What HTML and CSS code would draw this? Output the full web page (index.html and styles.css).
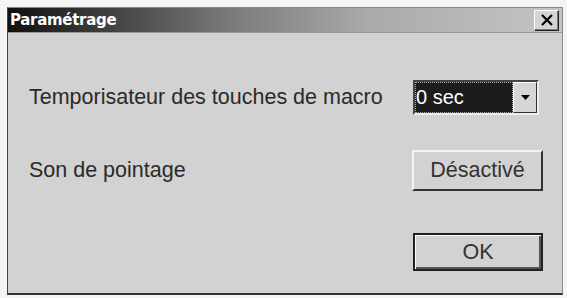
FILE: index.html
```html
<!DOCTYPE html>
<html lang="fr">
<head>
<meta charset="utf-8">
<link rel="stylesheet" href="styles.css">
</head>
<body>
<div class="window">
  <div class="titlebar">
    <span class="title">Paramétrage</span>
    <span class="close">
      <svg width="14" height="12" viewBox="0 0 14 12"><path d="M2 1 L12 11 M12 1 L2 11" stroke="#000" stroke-width="2.2" fill="none"/></svg>
    </span>
  </div>
  <div class="content">
    <div class="row row1">
      <span class="label">Temporisateur des touches de macro</span>
      <span class="select"><span class="value">0 sec</span><span class="arrow"><svg width="9" height="5" viewBox="0 0 9 5"><path d="M0 0 H9 L4.5 5 Z" fill="#000"/></svg></span></span>
    </div>
    <div class="row row2">
      <span class="label">Son de pointage</span>
      <span class="btn">Désactivé</span>
    </div>
    <div class="row row3">
      <span class="btn default">OK</span>
    </div>
  </div>
</div>
</body>
</html>
```
FILE: styles.css
```css
html, body { margin: 0; padding: 0; background: #f4f4f4; }
body { padding: 7px 4px 3px 7px; font-family: "Liberation Sans", Arial, sans-serif; }
.window {
  width: 556px; height: 288px;
  border-left: 1px solid #444;
  border-top: 1px solid #888;
  border-right: 1px solid #8a8a8a;
  border-bottom: 2px solid #333;
  background: #d2d2d2;
  display: flex; flex-direction: column;
  box-sizing: border-box;
}
.titlebar {
  height: 24px;
  background: linear-gradient(to right, #101010 0%, #303030 12%, #7a7a7a 40%, #aaaaaa 65%, #c4c4c4 100%);
  display: flex; align-items: center; justify-content: space-between;
  padding: 0 3px 0 2px;
  border-bottom: 1px solid #9a9a9a;
}
.title { color: #fff; font-weight: bold; font-size: 15px; font-family: "DejaVu Sans", sans-serif; letter-spacing: -0.3px; }
.close {
  width: 25px; height: 21px; box-sizing: border-box;
  background: #d4d4d4;
  border: 1px solid; border-color: #fff #222 #222 #fff;
  box-shadow: inset -1px -1px 0 #777;
  display: flex; align-items: center; justify-content: center;
}
.content { flex: 1; padding: 0 19px 0 21px; }
.row { display: flex; align-items: center; justify-content: space-between; }
.row1 { margin-top: 47px; height: 35px; }
.row2 { margin-top: 35px; height: 41px; }
.row3 { margin-top: 42px; justify-content: flex-end; }
.label { font-size: 21.5px; color: #2a2a2a; }
.select {
  width: 126px; height: 35px; box-sizing: border-box;
  border: 2px solid; border-color: #444 #eee #eee #444;
  display: flex; margin-right: 4px;
}
.value { flex: 1; background: #1c1c1c; color: #fff; font-size: 20px; display: flex; align-items: center; padding-left: 1px; outline: 1px dotted #aaa; outline-offset: -1px; }
.arrow {
  width: 22px; background: #d6d6d6;
  border: 1px solid; border-color: #fff #333 #333 #fff;
  display: flex; align-items: center; justify-content: center;
}
.btn {
  width: 131px; height: 41px; box-sizing: border-box;
  border: 2px solid; border-color: #f4f4f4 #333 #333 #f4f4f4;
  font-size: 21.5px; color: #333;
  display: flex; align-items: center; justify-content: center;
}
.btn.default {
  width: 130px; height: 38px;
  border: 2px solid #222;
  box-shadow: inset 1px 1px 0 #fff, inset -2px -2px 0 #555;
}
```
